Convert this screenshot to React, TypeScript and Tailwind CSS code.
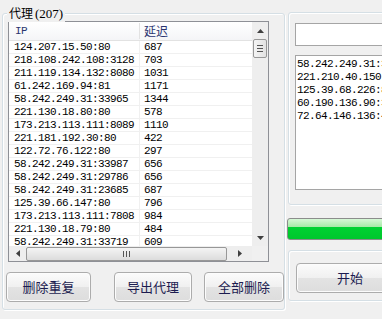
const rows: [string, string][] = [
  ["124.207.15.50:80", "687"],
  ["218.108.242.108:3128", "703"],
  ["211.119.134.132:8080", "1031"],
  ["61.242.169.94:81", "1171"],
  ["58.242.249.31:33965", "1344"],
  ["221.130.18.80:80", "578"],
  ["173.213.113.111:8089", "1110"],
  ["221.181.192.30:80", "422"],
  ["122.72.76.122:80", "297"],
  ["58.242.249.31:33987", "656"],
  ["58.242.249.31:29786", "656"],
  ["58.242.249.31:23685", "687"],
  ["125.39.66.147:80", "796"],
  ["173.213.113.111:7808", "984"],
  ["221.130.18.79:80", "484"],
  ["58.242.249.31:33719", "609"],
];

const found = [
  "58.242.249.31:33965",
  "221.210.40.150:80",
  "125.39.68.226:8080",
  "60.190.136.90:3128",
  "72.64.146.136:443",
];

const mono = "font-['Liberation_Mono',monospace] text-[11px] tracking-[-0.6px]";
const cjk = "font-['Noto_Sans_CJK_SC',sans-serif]";

const Arrow = ({ dir }: { dir: "up" | "down" | "left" | "right" }) => {
  const pts = {
    up: "0,4 3.5,0 7,4",
    down: "0,0 7,0 3.5,4",
    left: "4,0 4,7 0,3.5",
    right: "0,0 4,3.5 0,7",
  }[dir];
  const vert = dir === "up" || dir === "down";
  return (
    <svg width={vert ? 7 : 4} height={vert ? 4 : 7} viewBox={vert ? "0 0 7 4" : "0 0 4 7"}>
      <polygon points={pts} fill="#404040" />
    </svg>
  );
};

const Button = ({ label, className }: { label: string; className: string }) => (
  <button
    className={`${className} h-[30px] shrink-0 rounded-[4px] border border-[#acacac] bg-[linear-gradient(to_bottom,#fbfbfb_0%,#f0f0f0_50%,#e3e3e3_51%,#dddddd_100%)] shadow-[inset_0_0_0_1px_#fcfcfc] ${cjk} text-[13px] text-[#1c1c50]`}
  >
    {label}
  </button>
);

const ProxyList = () => (
  <div className="flex h-[241px] w-[261px] flex-col border border-[#8e9096] bg-white">
    <div className="flex h-[224px]">
      <div className="flex w-[243px] flex-col overflow-hidden">
        <div className="flex h-[19px] shrink-0 items-center border-b border-[#e2e2e2] bg-[linear-gradient(to_bottom,#ffffff,#f4f5f7)] text-[#2a3470]">
          <div className={`w-[131px] border-r border-[#e2e2e2] pl-[6px] ${mono}`}>IP</div>
          <div className={`pl-[4px] text-[12px] ${cjk}`}>延迟</div>
        </div>
        {rows.map(([ip, ms]) => (
          <div key={ip + ms} className={`flex h-[13px] shrink-0 items-center border-b border-[#f0f0f0] leading-[12px] text-black ${mono}`}>
            <div className="h-full w-[131px] border-r border-[#f0f0f0] pl-[5px]">{ip}</div>
            <div className="pl-[4px]">{ms}</div>
          </div>
        ))}
      </div>
      <div className="flex w-[16px] flex-col items-center bg-[#eeeeee]">
        <div className="flex h-[17px] items-center justify-center">
          <Arrow dir="up" />
        </div>
        <div className="flex h-[19px] w-[14px] flex-col items-center justify-center gap-[2px] rounded-[2px] border border-[#979797] bg-[linear-gradient(to_right,#f4f4f4,#e2e2e2)]">
          <div className="h-px w-[6px] bg-[#555]" />
          <div className="h-px w-[6px] bg-[#555]" />
          <div className="h-px w-[6px] bg-[#555]" />
        </div>
        <div className="flex-1" />
        <div className="flex h-[17px] items-center justify-center">
          <Arrow dir="down" />
        </div>
      </div>
    </div>
    <div className="flex h-[15px]">
      <div className="flex w-[243px] items-center bg-[#eeeeee]">
        <div className="flex w-[17px] justify-center">
          <Arrow dir="left" />
        </div>
        <div className="flex h-[14px] w-[201px] items-center justify-center gap-[2px] rounded-[2px] border border-[#979797] bg-[linear-gradient(to_bottom,#f4f4f4,#dcdcdc)]">
          <div className="h-[6px] w-px bg-[#555]" />
          <div className="h-[6px] w-px bg-[#555]" />
          <div className="h-[6px] w-px bg-[#555]" />
        </div>
        <div className="flex flex-1 justify-center">
          <Arrow dir="right" />
        </div>
      </div>
      <div className="flex-1 bg-[#f0f0f0]" />
    </div>
  </div>
);

export default function App() {
  return (
    <div className="flex h-[319px] w-[382px] overflow-hidden bg-[#f0f0f0]">
      <div className="relative ml-[2px] mt-[13px] flex h-[297px] w-[283px] shrink-0 flex-col rounded-[3px] border border-[#d5dfe5] pb-[7px] pl-[5px] pr-[15px] pt-[7px] shadow-[inset_1px_1px_0_#fff,1px_1px_0_#fff]">
        <span className={`absolute left-[4px] top-[-9px] bg-[#f0f0f0] px-[2px] text-[12px] leading-[16px] text-black ${cjk}`}>
          代理<span className="ml-[2px] font-['Liberation_Serif',serif] text-[13px]">(207)</span>
        </span>
        <ProxyList />
        <div className="ml-[-2px] mt-[10px] flex">
          <Button label="删除重复" className="w-[85px]" />
          <Button label="导出代理" className="ml-[23px] w-[78px]" />
          <Button label="全部删除" className="ml-[12px] w-[80px]" />
        </div>
      </div>
      <div className="ml-[2px] flex w-[140px] shrink-0 flex-col">
        <div className="ml-[1px] mt-[12px] flex h-[193px] flex-col rounded-[3px] border border-[#d5dfe5] pb-[14px] pl-[6px] pt-[10px] shadow-[inset_1px_1px_0_#fff,1px_1px_0_#fff]">
          <div className="h-[23px] w-[130px] border border-[#a5a5a5] bg-white" />
          <div className={`mt-[9px] h-[135px] w-[130px] overflow-hidden border border-[#a5a5a5] bg-white pl-px pt-[2px] leading-[13px] text-black ${mono}`}>
            {found.map((l) => (
              <div key={l} className="whitespace-nowrap">{l}</div>
            ))}
          </div>
        </div>
        <div className="mt-[13px] h-[22px] w-[130px] rounded-[3px] border border-[#8c8c8c] bg-[linear-gradient(to_bottom,#d6f8d6_0%,#a8eaa8_38%,#00d232_40%,#00c72d_100%)]" />
        <div className="ml-[1px] mt-[10px] h-[51px] rounded-[3px] border border-[#d5dfe5] pl-[7px] pt-[12px] shadow-[inset_1px_1px_0_#fff,1px_1px_0_#fff]">
          <Button label="开始" className="w-[108px]" />
        </div>
      </div>
    </div>
  );
}
